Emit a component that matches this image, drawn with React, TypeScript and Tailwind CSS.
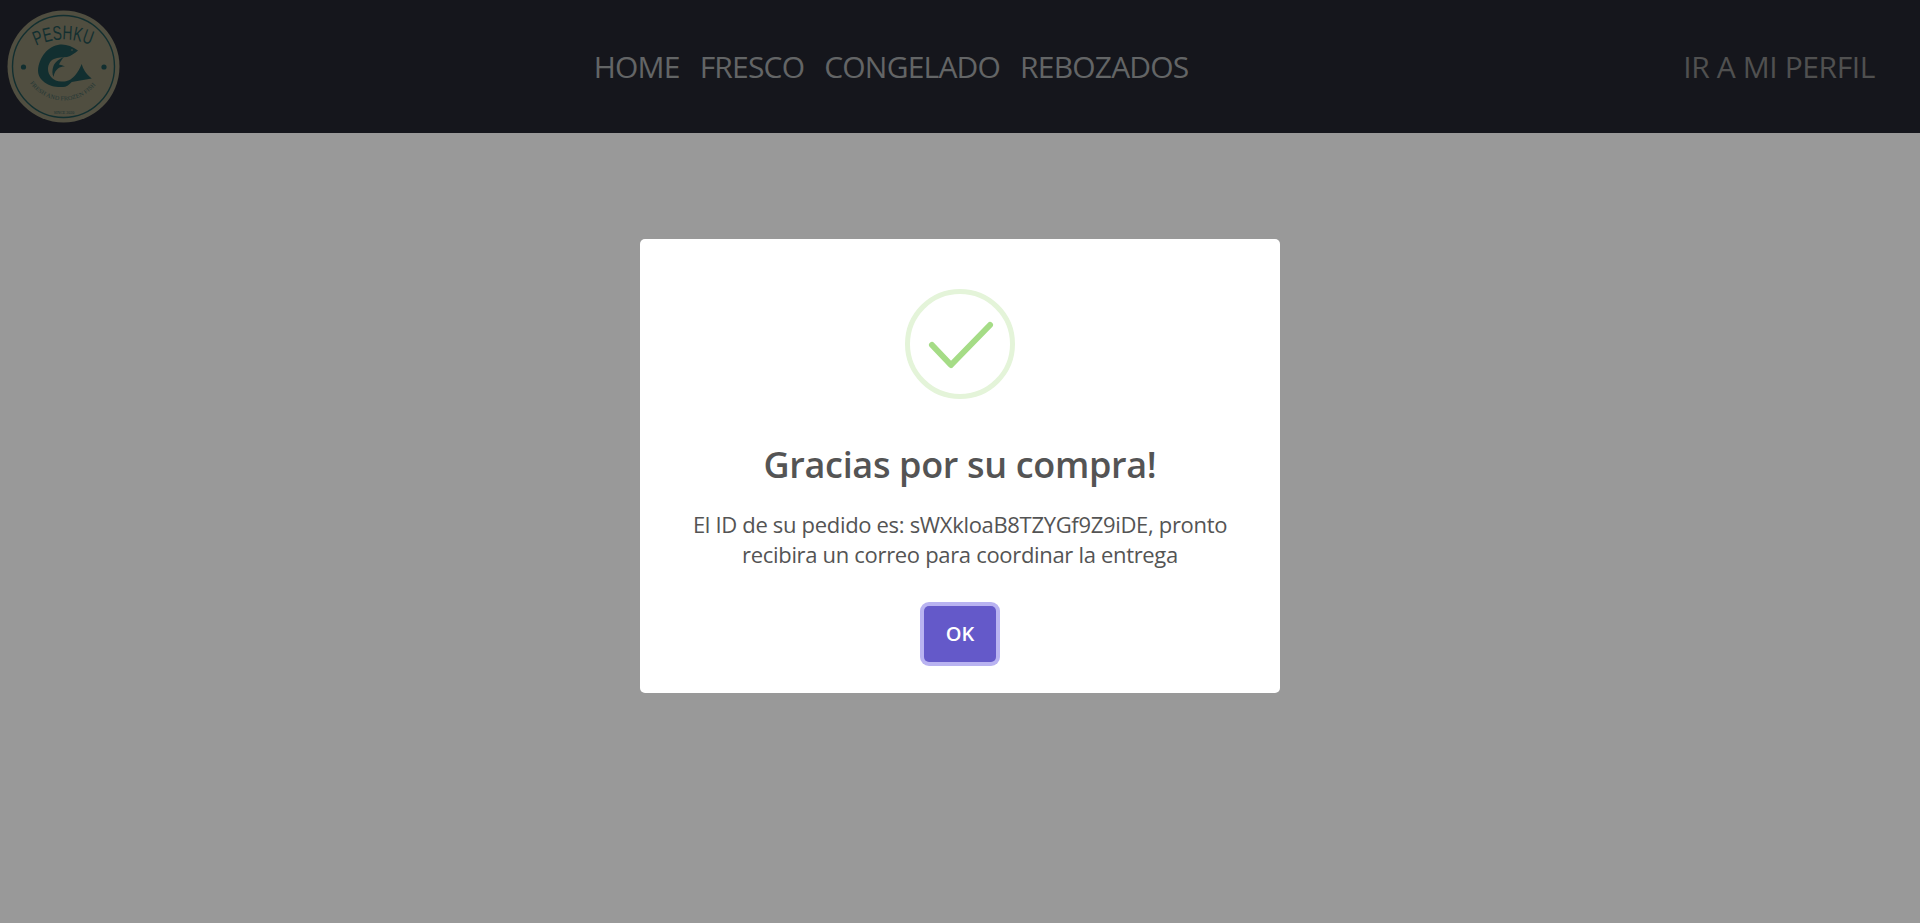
import React from 'react';

const links = ['HOME', 'FRESCO', 'CONGELADO', 'REBOZADOS'];

const Logo = () => (
  <svg width="116" height="116" viewBox="0 0 116 116" className="shrink-0">
    <defs>
      <path id="logo-top" d="M 30 37 A 64 64 0 0 1 86 37" />
      <path id="logo-bottom" d="M 24 74 A 41 41 0 0 0 91 74" />
    </defs>
    <circle cx="57.5" cy="57.5" r="56" fill="#85826c" />
    <circle cx="57.5" cy="57.5" r="51" fill="none" stroke="#1f4f50" strokeWidth="1.4" />
    <circle cx="17.5" cy="58" r="2.6" fill="#1f4f50" />
    <circle cx="98" cy="58" r="2.6" fill="#1f4f50" />
    <text fill="#1f4f50" fontSize="20" fontFamily="'Liberation Sans', sans-serif">
      <textPath href="#logo-top" textLength="56" lengthAdjust="spacingAndGlyphs">PESHKU</textPath>
    </text>
    {/* fish */}
    <path
      fill="#1f4f50"
      d="M72 41.5 C66 37 60 35 54 35.5 C42 37 33 48 32 61.5 C32 72 44 79 57 78 C60 78 63 76 65.7 73 L85.7 69.5 C80 65 77 60 75.7 55 C74 59 72 63 69 66.5 C65 71 61 72.5 57 72.5 C52 73 48 71 46 69 C43 66 42 63 42 60 C42 55 45 51 48 50 C52 48 56 48.5 61 48 C65 47 69 44 72 41.5 Z"
    />
    <path
      fill="#1f4f50"
      d="M58 48 C53 50 49 53 47.5 57 C46 61 46 65 47.5 68 C48 64 50 61 52 59.5 C54 58 56 57.5 59 57.5 C57 56.5 55 56 53 55.5 C54.5 52.5 56 50 58 48 Z"
    />
    <circle cx="66" cy="41" r="0.8" fill="#85826c" />
    <text fill="#1f4f50" fontSize="6" fontFamily="'Liberation Serif', serif" opacity="0.75">
      <textPath href="#logo-bottom" textLength="76" lengthAdjust="spacingAndGlyphs">FRESH AND FROZEN FISH</textPath>
    </text>
    <text x="58" y="105" textAnchor="middle" fill="#1f4f50" fontSize="4" fontFamily="'Liberation Serif', serif">
      SINCE 2020
    </text>
  </svg>
);

const App = () => {
  return (
    <div className="relative h-[923px] overflow-hidden bg-white font-['Open_Sans',sans-serif]">
      <nav className="flex h-[133px] items-center justify-between bg-[#23262f] pl-1.5 pr-[45px]">
        <Logo />
        <div className="ml-[-23px] flex gap-5">
          {links.map((link) => (
            <a key={link} className="text-[30px] leading-[40px] tracking-[-0.8px] text-[#a6a8aa]">
              {link}
            </a>
          ))}
        </div>
        <a className="text-[30px] leading-[40px] tracking-[-0.4px] text-[#858585]">IR A MI PERFIL</a>
      </nav>

      <div className="absolute inset-0 flex justify-center bg-black/40 pt-[239px]">
        <div className="flex h-[454px] w-[640px] flex-col items-center rounded-[5px] bg-white pt-[50px]">
          <svg width="110" height="110" viewBox="0 0 110 110">
            <circle cx="55" cy="55" r="52.5" fill="none" stroke="#e4f4d9" strokeWidth="5" />
            <path d="M27 56 L46 76 L85 36" fill="none" stroke="#a5dc86" strokeWidth="6" strokeLinecap="round" strokeLinejoin="round" />
          </svg>
          <h2 className="mt-[42px] text-[36px] font-semibold leading-[48px] tracking-[-0.33px] text-[#545454]">
            Gracias por su compra!
          </h2>
          <p className="mt-[20px] w-[560px] text-center text-[22px] leading-[30px] tracking-[-0.32px] text-[#545454]">
            El ID de su pedido es: sWXkloaB8TZYGf9Z9iDE, pronto recibira un correo para coordinar la entrega
          </p>
          <button className="mt-[37px] h-[56px] w-[72px] rounded-[5px] bg-[#6459c9] text-[20px] font-semibold text-white ring-4 ring-[#b9b3f1]">
            OK
          </button>
        </div>
      </div>
    </div>
  );
};

export default App;
